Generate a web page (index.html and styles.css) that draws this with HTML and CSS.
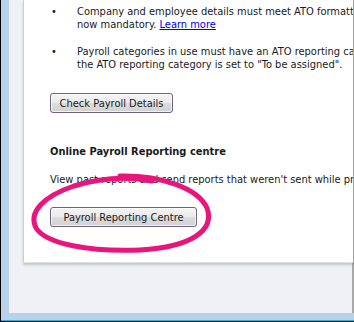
FILE: index.html
```html
<!DOCTYPE html>
<html lang="en">
<head>
    <meta charset="UTF-8">
    <meta name="viewport" content="width=device-width, initial-scale=1.0">
    <title>Payroll Reporting</title>
    <link rel="stylesheet" href="styles.css">
</head>
<body>
    <div class="window">
        <div class="frame">
            <div class="client">
                <div class="panel">
                    <div class="bullet-list">
                        <div class="bullet-item">
                            <span class="bullet">&bull;</span>
                            <p>Company and employee details must meet ATO formatting requirements. These are<br>now mandatory. <a href="#">Learn more</a></p>
                        </div>
                        <div class="bullet-item">
                            <span class="bullet">&bull;</span>
                            <p>Payroll categories in use must have an ATO reporting category assigned. Check that<br>the ATO reporting category is set to "To be assigned".</p>
                        </div>
                    </div>
                    <button class="win-button check-button">Check Payroll Details</button>

                    <h2>Online Payroll Reporting centre</h2>
                    <p class="intro">View past reports and send reports that weren't sent while processing pays.</p>
                    <button class="win-button centre-button">Payroll Reporting Centre</button>
                </div>
            </div>
        </div>
    </div>

    <!-- hand-drawn highlight round the button -->
    <svg class="highlight" width="354" height="322" viewBox="0 0 354 322">
        <path d="M120 176 C160 175, 198 188, 207 208 C215 230, 192 247, 140 250 C90 252, 46 244, 36 228 C28 212, 44 196, 74 186 C100 178, 126 176, 152 181"
              fill="none" stroke="#e8167c" stroke-width="5" stroke-linecap="round"/>
    </svg>
</body>
</html>
```

FILE: styles.css
```css
body {
    margin: 0;
    width: 354px;
    height: 322px;
    overflow: hidden;
    position: relative;
    font-family: "DejaVu Sans Condensed", "DejaVu Sans", sans-serif;
    font-size: 11px;
    color: #1a1a1a;
}

.window {
    height: 322px;
    box-sizing: border-box;
    border-left: 1px solid #000;
    border-bottom: 1px solid #000;
    background-color: #b9d1ea;
}

.frame {
    height: 100%;
    box-sizing: border-box;
    padding-left: 8px;
    padding-bottom: 7px;
    border-bottom: 1px solid #2fb3d9;
}

.client {
    height: 100%;
    box-sizing: border-box;
    background-color: #f0f1f4;
    padding-left: 14px;
    border-right: 2px solid #a9a9a9;
}

.panel {
    width: 330px;
    height: 263px;
    box-sizing: border-box;
    background-color: #fff;
    border-left: 1px solid #cfcfcf;
    border-bottom: 1px solid #e2e2e2;
    box-shadow: 0 2px 2px rgba(0, 0, 0, 0.18);
    padding: 5px 0 0 26px;
    white-space: nowrap;
    overflow: hidden;
}

p {
    margin: 0;
    line-height: 13px;
}

.bullet-list {
    display: flex;
    flex-direction: column;
    gap: 14px;
}

.bullet-item {
    display: flex;
}

.bullet {
    width: 26px;
    flex-shrink: 0;
    padding-left: 1px;
    line-height: 13px;
}

a {
    color: #0000ee;
}

.win-button {
    display: block;
    height: 20px;
    padding: 0;
    font-family: inherit;
    font-size: 11px;
    color: #1a1a1a;
    text-align: center;
    border: 1px solid #6f6380;
    border-radius: 3px;
    background: linear-gradient(#f4f4f4 0%, #ebebeb 48%, #dcdcdc 52%, #d2d2d2 100%);
    box-shadow: inset 0 0 0 1px rgba(255, 255, 255, 0.7);
}

.check-button {
    width: 123px;
    margin-top: 22px;
}

h2 {
    margin: 32px 0 0 0;
    font-size: 11px;
    line-height: 13px;
    font-weight: bold;
}

.intro {
    margin-top: 15px;
}

.centre-button {
    width: 147px;
    margin-top: 21px;
}

.highlight {
    position: absolute;
    left: 0;
    top: 0;
    pointer-events: none;
}
```
